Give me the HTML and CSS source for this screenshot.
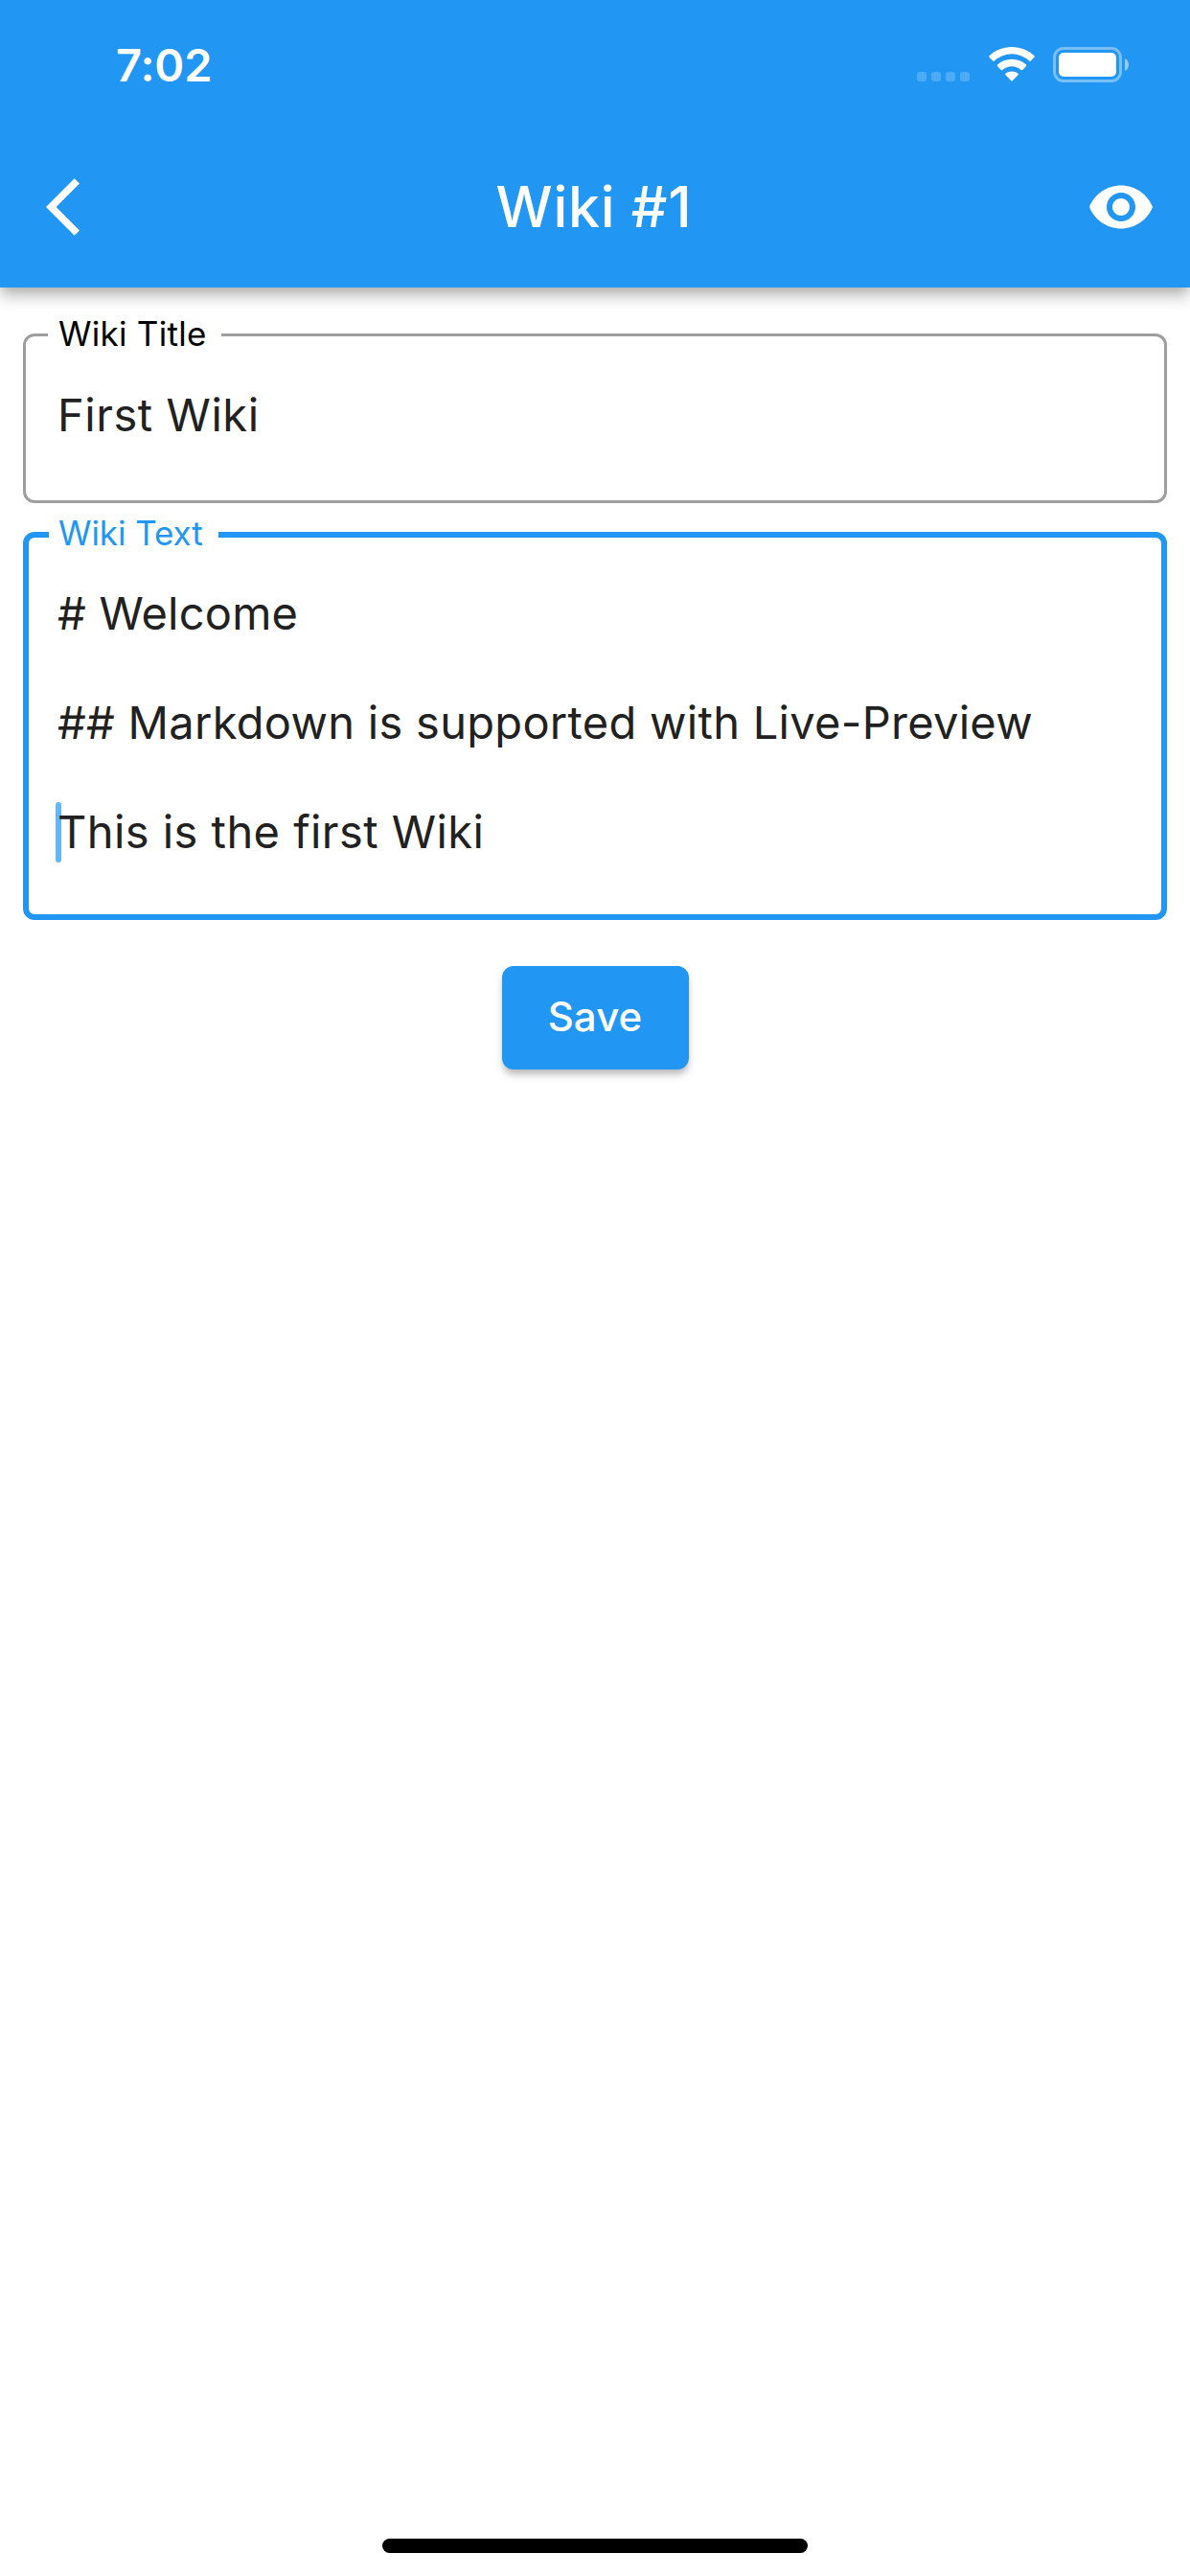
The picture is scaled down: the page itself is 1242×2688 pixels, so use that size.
FILE: index.html
```html
<!DOCTYPE html>
<html lang="en">
<head>
<meta charset="utf-8">
<title>Wiki #1</title>
<link rel="stylesheet" href="styles.css">
</head>
<body>
<div class="screen">
  <header class="app-bar">
    <div class="status-bar">
      <span class="time">7:02</span>
      <div class="status-icons">
        <div class="cellular"><i></i><i></i><i></i><i></i></div>
        <svg class="wifi" width="48" height="36" viewBox="0 0 48 36" fill="#fff">
          <path d="M24 0C33 0 41.500 3.500 47.500 9.200Q48.200 10 47.500 10.700L43.800 14.600Q43 15.300 42.200 14.600A26.500 26.500 0 0 0 5.800 14.600Q5 15.300 4.200 14.600L.5 10.700Q-.2 10 .5 9.200C6.500 3.500 15 0 24 0Z"/>
          <path d="M24 12.700C29.800 12.700 35 14.800 39 18.500Q39.700 19.200 39 20L35.200 23.900Q34.400 24.600 33.600 23.900A14.300 14.300 0 0 0 14.400 23.900Q13.600 24.600 12.800 23.900L9 20Q8.300 19.200 9 18.500C13 14.800 18.200 12.700 24 12.700Z"/>
          <path d="M24 25.500C26.500 25.500 28.700 26.300 30.500 27.800Q31.300 28.500 30.500 29.300L24.700 35.300Q24 36 23.300 35.300L17.500 29.300Q16.700 28.500 17.500 27.800C19.300 26.300 21.500 25.500 24 25.500Z"/>
        </svg>
        <svg class="battery" width="80" height="37" viewBox="0 0 80 37">
          <rect x="1.500" y="1.500" width="69" height="34" rx="9.500" fill="none" stroke="#fff" stroke-opacity=".4" stroke-width="3"/>
          <rect x="6" y="6" width="60" height="25" rx="5" fill="#fff"/>
          <path d="M75 12C77.500 13.200 79 15.600 79 18.500S77.500 23.800 75 25Z" fill="#fff" fill-opacity=".5"/>
        </svg>
      </div>
    </div>
    <div class="toolbar">
      <svg class="back" width="36" height="72" viewBox="0 0 12 24" fill="#fff"><path d="M11.670 3.870L9.900 2.100 0 12l9.900 9.900 1.770-1.770L3.540 12z"/></svg>
      <h1 class="title">Wiki #1</h1>
      <svg class="preview" width="72" height="72" viewBox="0 0 24 24" fill="#fff"><path d="M12 4.500C7 4.500 2.730 7.610 1 12c1.730 4.390 6 7.500 11 7.500s9.270-3.110 11-7.500c-1.730-4.390-6-7.500-11-7.500zM12 17c-2.760 0-5-2.240-5-5s2.240-5 5-5 5 2.240 5 5-2.240 5-5 5zm0-8c-1.660 0-3 1.340-3 3s1.340 3 3 3 3-1.340 3-3-1.340-3-3-3z"/></svg>
    </div>
  </header>
  <main class="form">
    <fieldset class="field field-title">
      <legend>Wiki Title</legend>
      <p class="value">First Wiki</p>
    </fieldset>
    <fieldset class="field field-text">
      <legend>Wiki Text</legend>
      <div class="lines">
        <p class="heading"># Welcome</p>
        <p>## Markdown is supported with Live-Preview</p>
        <p class="current">This is the first Wiki<span class="cursor"></span></p>
      </div>
    </fieldset>
    <button class="save" type="button">Save</button>
  </main>
  <div class="home-indicator"></div>
</div>
</body>
</html>
```
FILE: styles.css
```css
* { box-sizing: border-box; }

body {
  margin: 0;
  background: #fff;
  font-family: Inter, "Liberation Sans", sans-serif;
  color: #212121;
}

p, h1 { margin: 0; }
svg { display: block; }

.screen {
  display: flex;
  flex-direction: column;
  height: 2688px;
  overflow: hidden;
}

.app-bar {
  height: 300px;
  flex: none;
  background: #2196f3;
  color: #fff;
  box-shadow:
    0 6px 12px -3px rgba(0, 0, 0, .2),
    0 12px 15px 0 rgba(0, 0, 0, .14),
    0 3px 20px 0 rgba(0, 0, 0, .06);
}

.status-bar {
  display: flex;
  justify-content: space-between;
  height: 132px;
  padding: 0 63px 0 121px;
}

.time {
  padding-top: 40px;
  font-size: 47px;
  line-height: 56px;
  font-weight: 600;
  letter-spacing: -.1px;
}

.status-icons {
  display: flex;
  align-items: flex-start;
  padding-top: 49px;
}

.cellular {
  display: flex;
  gap: 5px;
  padding-top: 26px;
  margin-right: 19.5px;
}

.cellular i {
  width: 10px;
  height: 10px;
  border-radius: 3px;
  background: rgba(255, 255, 255, .2);
}

.battery { margin-left: 19.5px; }

.toolbar {
  display: grid;
  grid-template-columns: 72px 1fr 72px;
  align-items: center;
  height: 168px;
  padding: 0 36px 0 48px;
}

.title {
  padding-right: 14px;
  text-align: center;
  font-size: 59px;
  line-height: 72px;
  font-weight: 500;
  letter-spacing: .75px;
}

.form {
  flex: 1;
  display: flex;
  flex-direction: column;
  padding: 28px 24px 0;
}

.field {
  margin: 0;
  min-width: 0;
  border-radius: 12px;
}

.field legend {
  font-size: 35px;
  white-space: nowrap;
}

.field-title {
  height: 197px;
  padding: 33px 23px 0;
  border: 3px solid #9e9e9e;
}

.field-title legend {
  width: 181px;
  padding: 0 0 2px 11px;
  line-height: 41px;
  letter-spacing: .27px;
  color: #000;
}

.value {
  padding-left: 10px;
  font-size: 47px;
  line-height: 57px;
  letter-spacing: .55px;
}

.field-text {
  height: 424px;
  margin-top: 11px;
  padding: 31px 21px 0;
  border: 6px solid #2196f3;
}

.field-text legend {
  width: 177px;
  padding: 0 0 4px 10px;
  line-height: 40px;
  letter-spacing: -.05px;
  color: #2196f3;
}

.lines {
  display: flex;
  flex-direction: column;
  gap: 57px;
  padding-left: 9px;
  font-size: 47px;
  line-height: 57px;
  letter-spacing: .29px;
}

.heading { letter-spacing: .2px; }

.current {
  position: relative;
  z-index: 0;
  letter-spacing: .45px;
}

.cursor {
  position: absolute;
  z-index: -1;
  left: -2px;
  top: -2px;
  width: 6px;
  height: 63px;
  border-radius: 3px;
  background: #64b6f7;
}

.save {
  align-self: center;
  width: 195px;
  height: 108px;
  margin-top: 48px;
  padding: 0 0 2px;
  border: 0;
  border-radius: 12px;
  background: #2196f3;
  color: #fff;
  font: 500 42px/54px Inter, "Liberation Sans", sans-serif;
  letter-spacing: .1px;
  box-shadow:
    0 6px 6px -2px rgba(0, 0, 0, .16),
    0 6px 10px 0 rgba(0, 0, 0, .14);
}

.home-indicator {
  align-self: center;
  flex: none;
  width: 444px;
  height: 15px;
  margin-bottom: 24px;
  border-radius: 8px;
  background: #000;
}
```
